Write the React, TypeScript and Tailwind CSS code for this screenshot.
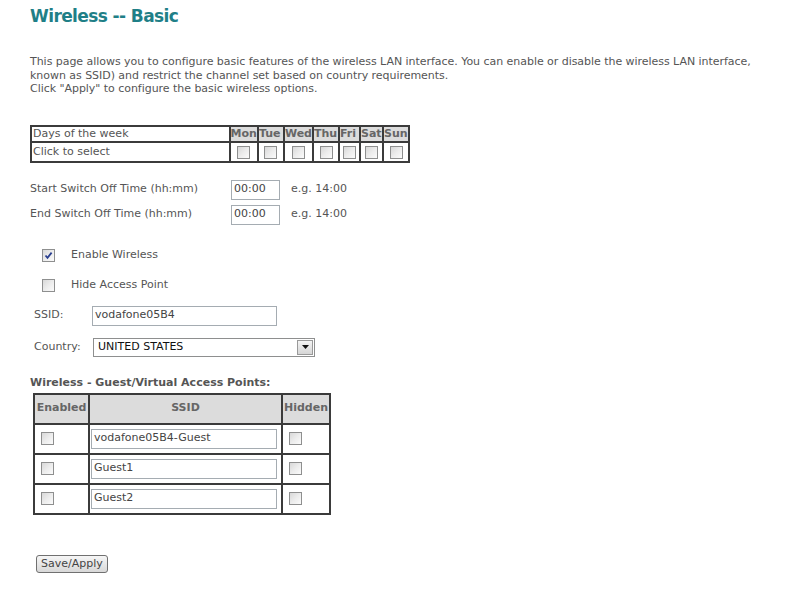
import React from 'react';

const days = ['Mon', 'Tue', 'Wed', 'Thu', 'Fri', 'Sat', 'Sun'];
const dayWidths = ['w-[28px]', 'w-[26px]', 'w-[27px]', 'w-[26px]', 'w-[21px]', 'w-[23px]', 'w-[26px]'];

const guests = ['vodafone05B4-Guest', 'Guest1', 'Guest2'];

function Box({ checked = false }: { checked?: boolean }) {
  return (
    <span className="relative inline-block h-[13px] w-[13px] shrink-0 border border-[#8e8f8f] bg-gradient-to-br from-[#d8d8d8] via-[#ececec] to-[#fbfbfb]">
      {checked && (
        <svg viewBox="0 0 11 11" className="absolute inset-0 h-[11px] w-[11px]">
          <path d="M2.5 5.5 L4.5 7.8 L8.6 2.6" fill="none" stroke="#2a3f8f" strokeWidth="1.8" />
        </svg>
      )}
    </span>
  );
}

function TextBox({ value, className }: { value: string; className: string }) {
  return (
    <div className={`flex h-[20px] items-center border border-[#a5acb2] bg-white px-[2px] text-[#444] ${className}`}>
      {value}
    </div>
  );
}

export default function App() {
  return (
    <div className="min-h-[591px] bg-white pl-[30px] pt-[5px] font-['DejaVu_Sans',sans-serif] text-[11px] text-[#555]">
      <h1 className="text-[17px] font-bold leading-[22px] tracking-[-0.6px] text-[#1f7f87]">Wireless -- Basic</h1>

      <p className="mt-[28px] leading-[13.5px] tracking-[-0.04px]">
        This page allows you to configure basic features of the wireless LAN interface. You can enable or disable the wireless LAN interface,
        <br />
        known as SSID) and restrict the channel set based on country requirements.
        <br />
        Click "Apply" to configure the basic wireless options.
      </p>

      {/* schedule table */}
      <table className="mt-[29px] w-[380px] border-collapse border-2 border-[#3b3b3b]">
        <tbody>
          <tr className="h-[16px]">
            <td className="border-2 border-[#3b3b3b] px-[1px] leading-[12px]">Days of the week</td>
            {days.map((d, i) => (
              <td
                key={d}
                className={`${dayWidths[i]} border-2 border-[#3b3b3b] bg-[#dcdcdc] px-0 text-left font-bold leading-[12px] text-[#666]`}
              >
                {d}
              </td>
            ))}
          </tr>
          <tr className="h-[20px]">
            <td className="border-2 border-[#3b3b3b] px-[1px] leading-[12px]">Click to select</td>
            {days.map((d) => (
              <td key={d} className="border-2 border-[#3b3b3b] text-center">
                <span className="flex justify-center pt-[1px]">
                  <Box />
                </span>
              </td>
            ))}
          </tr>
        </tbody>
      </table>

      <div className="mt-[17px] flex flex-col gap-[5px]">
        {['Start Switch Off Time (hh:mm)', 'End Switch Off Time (hh:mm)'].map((label) => (
          <div key={label} className="flex items-center">
            <span className="w-[201px]">{label}</span>
            <TextBox value="00:00" className="w-[49px]" />
            <span className="ml-[11px]">e.g. 14:00</span>
          </div>
        ))}
      </div>

      <div className="mt-[21px] flex flex-col gap-[10px] pl-[12px]">
        <div className="flex h-[20px] items-center">
          <Box checked />
          <span className="ml-[16px]">Enable Wireless</span>
        </div>
        <div className="flex h-[20px] items-center">
          <Box />
          <span className="ml-[16px]">Hide Access Point</span>
        </div>
      </div>

      <div className="mt-[10px] flex items-center pl-[4px]">
        <span className="w-[58px]">SSID:</span>
        <TextBox value="vodafone05B4" className="w-[185px]" />
      </div>

      <div className="mt-[12px] flex items-center pl-[4px]">
        <span className="w-[59px]">Country:</span>
        <div className="flex h-[19px] w-[222px] items-center border border-[#8e8f8f] bg-white">
          <span className="flex-1 pl-[4px] text-[#111]">UNITED STATES</span>
          <span className="mr-[1px] flex h-[15px] w-[16px] items-center justify-center border border-[#9a9a9a] bg-gradient-to-b from-[#f4f4f4] to-[#d6d6d6]">
            <svg viewBox="0 0 7 4" className="h-[4px] w-[7px]">
              <path d="M0 0 H7 L3.5 4 Z" fill="#111" />
            </svg>
          </span>
        </div>
      </div>

      <div className="mt-[19px] font-bold leading-[14px] text-[#555]">Wireless - Guest/Virtual Access Points:</div>

      {/* guest SSIDs */}
      <table className="ml-[3px] mt-[3px] w-[298px] border-collapse border-2 border-[#3b3b3b]">
        <thead>
          <tr className="h-[30px] bg-[#dcdcdc] font-bold text-[#666]">
            <th className="w-[55px] border-2 border-[#3b3b3b] px-[1px] font-bold">Enabled</th>
            <th className="border-2 border-[#3b3b3b] font-bold">SSID</th>
            <th className="w-[48px] border-2 border-[#3b3b3b] px-[1px] font-bold">Hidden</th>
          </tr>
        </thead>
        <tbody>
          {guests.map((g) => (
            <tr key={g} className="h-[30px]">
              <td className="border-2 border-[#3b3b3b] pl-[6px]">
                <span className="flex">
                  <Box />
                </span>
              </td>
              <td className="border-2 border-[#3b3b3b] px-[1px]">
                <TextBox value={g} className="w-[186px]" />
              </td>
              <td className="border-2 border-[#3b3b3b] pl-[6px]">
                <span className="flex">
                  <Box />
                </span>
              </td>
            </tr>
          ))}
        </tbody>
      </table>

      <button className="ml-[6px] mt-[40px] block h-[18px] rounded-[3px] border border-[#707070] bg-gradient-to-b from-[#f6f6f6] to-[#d8d8d8] px-[4px] text-[11px] leading-[14px] text-[#444]">
        Save/Apply
      </button>
    </div>
  );
}
